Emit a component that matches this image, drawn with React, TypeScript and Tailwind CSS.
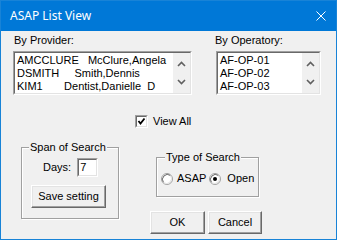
import React from "react";

const font = { fontFamily: '"Liberation Sans", Arial, sans-serif' };

const Sunken = ({ className, children }: { className?: string; children: React.ReactNode }) => (
  <div className={`border border-t-[#a0a0a0] border-l-[#a0a0a0] border-r-white border-b-white ${className ?? ""}`}>
    <div className="h-full border border-t-[#696969] border-l-[#696969] border-r-[#e3e3e3] border-b-[#e3e3e3] bg-white">
      {children}
    </div>
  </div>
);

const Chevron = ({ up }: { up?: boolean }) => (
  <svg width="9" height="6" viewBox="0 0 9 6">
    <polyline
      points={up ? "1,5 4.5,1.5 8,5" : "1,1 4.5,4.5 8,1"}
      fill="none"
      stroke="#606060"
      strokeWidth="1.6"
    />
  </svg>
);

const ListBox = ({ items, width }: { items: string[]; width: string }) => (
  <Sunken className={`${width} h-[44px]`}>
    <div className="flex h-full">
      <div className="flex-1 pl-[2px] pt-[1px] text-[11px] leading-[13px] text-black whitespace-pre">
        {items.map((t) => (
          <div key={t}>{t}</div>
        ))}
      </div>
      <div className="w-[17px] bg-[#f0f0f0] flex flex-col items-center justify-between pt-[8px] pb-[8px]">
        <Chevron up />
        <Chevron />
      </div>
    </div>
  </Sunken>
);

const Button = ({ label, width }: { label: string; width: string }) => (
  <button
    className={`${width} h-[23px] bg-[#f0f0f0] border border-t-white border-l-white border-r-[#696969] border-b-[#696969] shadow-[inset_-1px_-1px_0_#a0a0a0,inset_1px_1px_0_#e3e3e3] text-[11px] text-black flex items-center justify-center`}
  >
    {label}
  </button>
);

const Radio = ({ checked }: { checked?: boolean }) => (
  <svg width="12" height="12" viewBox="0 0 12 12">
    <circle cx="6" cy="6" r="5.5" fill="#fff" stroke="#a0a0a0" />
    <path d="M2.5 9.5 A5 5 0 0 1 9.5 2.5" fill="none" stroke="#696969" />
    <path d="M2.5 9.5 A5 5 0 0 0 9.5 2.5" fill="none" stroke="#e3e3e3" />
    {checked && <circle cx="6" cy="6" r="2" fill="#000" />}
  </svg>
);

export default function App() {
  return (
    <div className="w-[337px] h-[240px] border border-[#1883d7] flex flex-col" style={font}>
      <div className="h-[30px] bg-[#0078d7] flex items-center justify-between pl-[9px] pr-[10px]">
        <span className="text-white text-[12px]" style={{ fontFamily: '"Noto Sans", "Open Sans", sans-serif' }}>
          ASAP List View
        </span>
        <svg width="10" height="10" viewBox="0 0 10 10">
          <path d="M0.5 0.5 L9.5 9.5 M9.5 0.5 L0.5 9.5" stroke="#fff" strokeWidth="1" />
        </svg>
      </div>

      <div className="flex-1 bg-[#f0f0f0] pl-[12px] pt-[3px] text-[11px] text-black">
        <div className="flex gap-[24px]">
          <div className="w-[179px]">
            <div className="h-[13px] leading-[13px] ml-[1px]">By Provider:</div>
            <ListBox
              width="w-[179px] mt-[4px]"
              items={["AMCCLURE   McClure,Angela", "DSMITH     Smith,Dennis", "KIM1       Dentist,Danielle  D"]}
            />
          </div>
          <div className="w-[105px]">
            <div className="h-[13px] leading-[13px] -ml-[1px]">By Operatory:</div>
            <ListBox width="w-[105px] mt-[4px]" items={["AF-OP-01", "AF-OP-02", "AF-OP-03"]} />
          </div>
        </div>

        <div className="flex items-center mt-[20px] ml-[122px] h-[13px]">
          <Sunken className="w-[13px] h-[13px]">
            <svg width="9" height="9" viewBox="0 0 9 9" className="block">
              <polyline points="1.5,4 3.5,6.5 7.5,1.5" fill="none" stroke="#000" strokeWidth="1.8" />
            </svg>
          </Sunken>
          <span className="ml-[5px] leading-[13px]">View All</span>
        </div>

        <div className="flex items-start mt-[13px]">
          <fieldset className="ml-[8px] w-[98px] border border-[#a0a0a0] shadow-[1px_1px_0_#fff,inset_1px_1px_0_#fff] pb-[10px]">
            <legend className="ml-[7px] px-[1px] leading-[13px] bg-[#f0f0f0]">Span of Search</legend>
            <div className="flex items-center mt-[4px] ml-[21px] h-[19px]">
              <span>Days:</span>
              <Sunken className="ml-[6px] w-[21px] h-[19px]">
                <div className="pl-[1px] leading-[15px]">7</div>
              </Sunken>
            </div>
            <div className="mt-[8px] ml-[9px]">
              <Button label="Save setting" width="w-[75px]" />
            </div>
          </fieldset>

          <div className="ml-[31px] flex flex-col">
            <fieldset className="mt-[10px] ml-[6px] w-[103px] border border-[#a0a0a0] shadow-[1px_1px_0_#fff,inset_1px_1px_0_#fff] pb-[11px]">
              <legend className="ml-[8px] px-[1px] leading-[13px] bg-[#f0f0f0]">Type of Search</legend>
              <div className="flex items-center mt-[8px] ml-[4px] h-[13px]">
                <Radio />
                <span className="ml-[4px]">ASAP</span>
                <span className="ml-[3px] flex">
                  <Radio checked />
                </span>
                <span className="ml-[6px]">Open</span>
              </div>
            </fieldset>
            <div className="flex gap-[3px] mt-[14px]">
              <Button label="OK" width="w-[55px]" />
              <Button label="Cancel" width="w-[54px]" />
            </div>
          </div>
        </div>
      </div>
    </div>
  );
}
